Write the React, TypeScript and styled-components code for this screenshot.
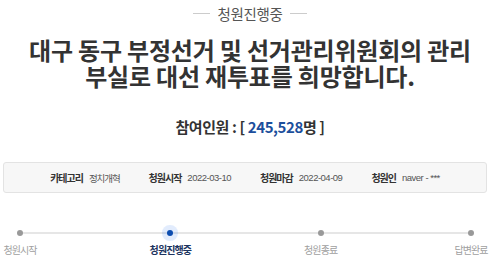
import React from 'react';
import styled, { createGlobalStyle } from 'styled-components';

const GlobalStyle = createGlobalStyle`
  html, body {
    margin: 0;
    padding: 0;
    background: #fff;
  }
  body {
    font-family: 'Noto Sans CJK KR', 'Noto Sans', sans-serif;
  }
`;

const Page = styled.div`
  width: 500px;
  height: 270px;
  overflow: hidden;
  display: flex;
  flex-direction: column;
`;

const Status = styled.div`
  display: flex;
  align-items: center;
  justify-content: center;
  gap: 7px;
  height: 26px;
  font-size: 14.5px;
  color: #555;
  letter-spacing: -0.3px;
  &::before,
  &::after {
    content: '';
    width: 17px;
    height: 1px;
    background: #ccc;
  }
`;

const Title = styled.h1`
  margin: 11px 0 0;
  font-size: 24px;
  line-height: 26px;
  font-weight: 700;
  color: #333;
  text-align: center;
  letter-spacing: -0.2px;
`;

const Count = styled.div`
  margin-top: 28px;
  font-size: 15px;
  line-height: 20px;
  font-weight: 700;
  color: #333;
  text-align: center;
  letter-spacing: -0.4px;
`;

const Num = styled.span`
  color: #1c4f9c;
`;

const InfoBox = styled.div`
  margin: 25px 0 0 3px;
  width: 484px;
  height: 31px;
  box-sizing: border-box;
  border: 1px solid #e3e3e3;
  border-radius: 3px;
  background: #f7f7f7;
  display: flex;
  align-items: center;
  justify-content: center;
  gap: 29px;
`;

const InfoItem = styled.div`
  display: flex;
  align-items: center;
  gap: 6px;
`;

const InfoLabel = styled.span`
  font-size: 10px;
  font-weight: 700;
  color: #333;
  letter-spacing: -1px;
`;

const InfoValue = styled.span<{ $num?: boolean }>`
  color: #555;
  font-size: ${p => (p.$num ? '9.5px' : '9.5px')};
  letter-spacing: ${p => (p.$num ? '-0.5px' : '-1.1px')};
  font-family: ${p => (p.$num ? "'Liberation Sans', sans-serif" : 'inherit')};
`;

const Timeline = styled.div`
  margin-top: 32px;
  display: flex;
  flex-direction: column;
  width: 491px;
`;

const Track = styled.div`
  height: 16px;
  display: flex;
  justify-content: space-between;
  align-items: center;
  background: linear-gradient(#e6e6e6, #e6e6e6) no-repeat center / calc(100% - 40px) 2px;
`;

const Cell = styled.div`
  width: 40px;
  display: flex;
  justify-content: center;
`;

const Dot = styled.span<{ $active?: boolean }>`
  width: 6px;
  height: 6px;
  border-radius: 50%;
  background: ${p => (p.$active ? '#0d4db0' : '#999')};
  box-shadow: ${p => (p.$active ? '0 0 0 5px rgba(60, 130, 240, 0.15)' : 'none')};
`;

const Labels = styled.div`
  margin-top: 2px;
  display: flex;
  justify-content: space-between;
`;

const StepLabel = styled.div<{ $active?: boolean }>`
  width: 40px;
  display: flex;
  justify-content: center;
  white-space: nowrap;
  font-size: 10px;
  line-height: 14px;
  letter-spacing: -0.9px;
  font-weight: ${p => (p.$active ? 700 : 400)};
  color: ${p => (p.$active ? '#1d3560' : '#a0a0a0')};
`;

const info = [
  { label: '카테고리', value: '정치개혁' },
  { label: '청원시작', value: '2022-03-10', num: true },
  { label: '청원마감', value: '2022-04-09', num: true },
  { label: '청원인', value: 'naver - ***', num: true },
];

const steps = ['청원시작', '청원진행중', '청원종료', '답변완료'];
const current = 1;

export default function App() {
  return (
    <Page>
      <GlobalStyle />
      <Status>청원진행중</Status>
      <Title>
        대구 동구 부정선거 및 선거관리위원회의 관리
        <br />
        부실로 대선 재투표를 희망합니다.
      </Title>
      <Count>
        참여인원 : [ <Num>245,528</Num>명 ]
      </Count>
      <InfoBox>
        {info.map(item => (
          <InfoItem key={item.label}>
            <InfoLabel>{item.label}</InfoLabel>
            <InfoValue $num={item.num}>{item.value}</InfoValue>
          </InfoItem>
        ))}
      </InfoBox>
      <Timeline>
        <Track>
          {steps.map((s, i) => (
            <Cell key={s}>
              <Dot $active={i === current} />
            </Cell>
          ))}
        </Track>
        <Labels>
          {steps.map((s, i) => (
            <StepLabel key={s} $active={i === current}>
              {s}
            </StepLabel>
          ))}
        </Labels>
      </Timeline>
    </Page>
  );
}
